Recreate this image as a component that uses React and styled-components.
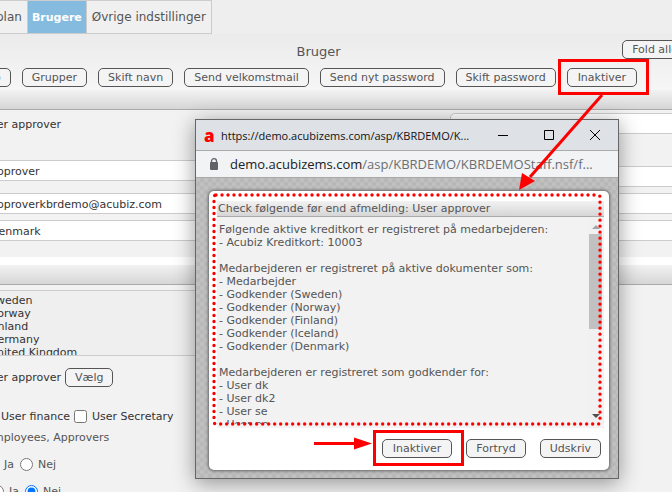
import React, { useState } from 'react'
import styled, { createGlobalStyle } from 'styled-components';

const GlobalStyle = createGlobalStyle`
    * { box-sizing: border-box; }

    body {
        margin: 0;
        background: #f2f2f2;
        font-family: Verdana, "DejaVu Sans", sans-serif;
        font-size: 11px;
        line-height: 13px;
        color: #555;
    }
`

const Page = styled.div`
    position: relative;
    height: 100vh;
    overflow: hidden;
`

/* the page is scrolled a little to the right, so it runs past both edges */
const Sheet = styled.div`
    margin: 0 -16px 0 -17px;
`

const Tabs = styled.nav`
    display: flex;
    height: 34px;
    background: #eee;
`

const Tab = styled.a`
    display: flex;
    align-items: center;
    padding: 0 ${props => props.$active ? '4px' : '5px'};
    border: 1px solid #ccc;
    border-left-width: ${props => props.$first ? '1px' : '0'};
    background: ${props => props.$active ? '#86bbe0' : '#f0f0f0'};
    color: ${props => props.$active ? '#fff' : '#555'};
    font-size: ${props => props.$active ? '11px' : '12px'};
    font-weight: ${props => props.$active ? 'bold' : 'normal'};
    text-decoration: none;
    white-space: nowrap;

    &:first-child { padding-left: 12px; }
`

const Header = styled.header`
    padding: 6px 0 3px;
    background: linear-gradient(#ebebeb, #f6f6f6);
`

const TitleRow = styled.div`
    display: flex;
    align-items: center;
`

const Title = styled.h1`
    flex: 1;
    margin: 0;
    padding: 4px 0 0 32px;
    font-size: 13px;
    line-height: 15px;
    font-weight: normal;
    text-align: center;
`

const Toolbar = styled.div`
    display: flex;
    gap: 11px;
    margin: 9px 0 0 -13px;
`

const Button = styled.button`
    flex: none;
    height: 19px;
    padding: 0 9px;
    border: 1px solid #555;
    border-radius: 5px;
    background: #f4f4f4;
    color: #555;
    font: inherit;
    line-height: 15px;
    white-space: nowrap;
`

const Highlight = styled.span`
    position: relative;
    display: flex;

    ${Button} { padding: 0 10px; }

    &::after {
        content: '';
        position: absolute;
        z-index: 1;
        inset: -9px -12px -8px -9px;
        border: 3px solid #f00;
        pointer-events: none;
    }
`

const SectionBar = styled.div`
    height: 20px;
    border-bottom: 1px solid #aaa;
    background: linear-gradient(#f2f2f2, #d6d6d6);
`

const Fields = styled.div`
    display: grid;
    grid-template-columns: 1fr 238px;
    padding: 3px 0 16px;
    border-bottom: 8px solid #fff;
`

const Column = styled.div`
    display: flex;
    flex-direction: column;
`

const Static = styled.div`
    color: #333;
    line-height: 23px;
`

const Input = styled.input`
    width: 100%;
    height: 21px;
    margin-top: ${props => props.$gap || 0}px;
    padding: 2px 6px 0;
    border: 1px solid #ccc;
    border-radius: 5px;
    background: #fff;
    color: #333;
    font: inherit;
`

const List = styled.select`
    display: block;
    width: 60%;
    height: 66px;
    margin-top: 5px;
    padding: 3px 5px 0;
    border: 1px solid #ccc;
    background: #efefef;
    color: #333;
    font: inherit;
    overflow: hidden;

    option {
        min-height: 13px;
        padding: 0;
    }
`

const Row = styled.div`
    display: flex;
    align-items: center;
    gap: ${props => props.$wide ? '6px' : '4px'};
    margin-top: ${props => props.$gap}px;
    padding-left: ${props => props.$indent || 0}px;
    color: ${props => props.$dark ? '#333' : '#555'};
`

const Choice = styled.label`
    display: flex;
    align-items: center;
    gap: 5px;

    input {
        width: 13px;
        height: 13px;
        margin: 0;
    }
`

const Window = styled.section`
    position: absolute;
    top: 119px;
    left: 195px;
    display: flex;
    flex-direction: column;
    width: 424px;
    height: 360px;
    border: 1px solid #666;
    box-shadow: 0 4px 20px rgba(0, 0, 0, .4);
    font-family: "Segoe UI", "Open Sans", sans-serif;
`

const TitleBar = styled.div`
    display: flex;
    align-items: center;
    height: 31px;
    padding: 0 16px 0 8px;
    border-bottom: 1px solid #aaa;
    background: #dee1e6;
    color: #111;
    font-size: 11px;
`

const Favicon = styled.span`
    flex: none;
    width: 17px;
    color: #f00;
    font-size: 17px;
    font-weight: 800;
`

const WindowTitle = styled.span`
    flex: 1;
    min-width: 0;
    white-space: nowrap;
`

const WindowButton = styled.button`
    flex: none;
    display: flex;
    width: 14px;
    margin-left: 32px;
    padding: 0;
    border: 0;
    background: none;
`

const AddressBar = styled.div`
    display: flex;
    align-items: center;
    gap: 11px;
    height: 27px;
    padding: 0 13px;
    border-bottom: 1px solid #aaa;
    background: #f1f3f4;
    color: #6b6f74;
    font-size: 13px;
    white-space: nowrap;

    svg { flex: none; }

    b {
        color: #202124;
        font-weight: normal;
    }
`

const Backdrop = styled.div`
    flex: 1;
    display: flex;
    min-height: 0;
    padding: 13px 9px 8px 13px;
    background: repeating-conic-gradient(#b8b8b8 0 25%, #c0c0c0 0 50%) 0 0 / 8px 8px;
`

const Card = styled.div`
    position: relative;
    flex: 1;
    display: flex;
    flex-direction: column;
    min-width: 0;
    padding: 10px 5px 12px 8px;
    border-radius: 5px;
    background: #fff;
    box-shadow: 0 0 3px 1px #666;
    font-family: Verdana, "DejaVu Sans", sans-serif;
`

const DottedFrame = styled.svg`
    position: absolute;
    top: 4px;
    left: 5px;
    width: calc(100% - 14px);
    height: calc(100% - 50px);
    overflow: visible;
    pointer-events: none;
`

const CardTitle = styled.h2`
    margin: 0;
    padding: 0 1px;
    border-bottom: 1px solid #aaa;
    background: linear-gradient(#f2f2f2, #d6d6d6);
    font-size: 11px;
    line-height: 15px;
    font-weight: normal;
`

const Report = styled.div`
    flex: 1;
    display: flex;
    min-height: 0;
    padding-bottom: 4px;
    background: #f2f2f2;
`

const ReportText = styled.div`
    flex: 1;
    padding: 6px 2px 0;
    overflow: hidden;

    p { margin: 0 0 13px; }
`

const ScrollTrack = styled.div`
    display: flex;
    flex-direction: column;
    align-items: center;
    width: 17px;
    padding: 8px 0 6px;
    background: #f1f1f1;

    svg { flex: none; }
`

const ScrollThumb = styled.div`
    width: 13px;
    height: 95px;
    margin: 5px 0 auto;
    background: #c1c1c1;
`

const Actions = styled.div`
    display: flex;
    justify-content: flex-end;
    gap: 14px;
    margin-top: 11px;
    padding-right: 3px;
`

const Arrows = styled.svg`
    position: absolute;
    top: 0;
    left: 0;
    pointer-events: none;
`

const countries = ['Sweden', 'Norway', 'Finland', 'Germany', 'United Kingdom'];

const report = [
    ['Følgende aktive kreditkort er registreret på medarbejderen:', '- Acubiz Kreditkort: 10003'],
    [
        'Medarbejderen er registreret på aktive dokumenter som:',
        '- Medarbejder',
        '- Godkender (Sweden)',
        '- Godkender (Norway)',
        '- Godkender (Finland)',
        '- Godkender (Iceland)',
        '- Godkender (Denmark)',
    ],
    ['Medarbejderen er registreret som godkender for:', '- User dk', '- User dk2', '- User se', '- User no'],
];

const YesNo = ({name, gap, indent, initial}) => {
    const [value, setValue] = useState(initial);

    return (
        <Row $gap={gap} $indent={indent} $wide>
            <Choice>
                <input type="radio" name={name} checked={value === 'ja'} onChange={() => setValue('ja')} />
                Ja
            </Choice>
            <Choice>
                <input type="radio" name={name} checked={value === 'nej'} onChange={() => setValue('nej')} />
                Nej
            </Choice>
        </Row>
    )
}

const UserForm = () => (
    <form onSubmit={(ev) => ev.preventDefault()}>
        <SectionBar />
        <Fields>
            <Column>
                <Static>User approver</Static>
                <Input aria-label="Kortnavn" $gap={24} defaultValue="approver" />
                <Input aria-label="E-mail" $gap={12} defaultValue="approverkbrdemo@acubiz.com" />
                <Input aria-label="Land" $gap={6} defaultValue="Denmark" />
            </Column>
            <Column>
                <Input aria-label="Felt 1" />
                <Input aria-label="Felt 2" $gap={32} />
                <Input aria-label="Felt 3" $gap={6} />
                <Input aria-label="Felt 4" $gap={6} />
            </Column>
        </Fields>
        <SectionBar />
        <List multiple size={5} aria-label="Lande">
            {countries.map(country => <option key={country}>{country}</option>)}
        </List>
        <Row $gap={12} $dark>
            User approver
            <Button type="button">Vælg</Button>
        </Row>
        <Row $gap={23} $dark>
            <Choice><input type="checkbox" />User finance</Choice>
            <Choice><input type="checkbox" />User Secretary</Choice>
        </Row>
        <Row $gap={8} $indent={3}>Employees, Approvers</Row>
        <YesNo name="first" gap={14} indent={3} />
        <YesNo name="second" gap={14} indent={8} initial="nej" />
    </form>
)

const Popup = () => (
    <Window role="dialog" aria-label="Inaktiver">
        <TitleBar>
            <Favicon>a</Favicon>
            <WindowTitle>https://demo.acubizems.com/asp/KBRDEMO/K...</WindowTitle>
            <WindowButton aria-label="Minimer">
                <svg width="14" height="14"><path d="M2 7.500h10" stroke="#000" /></svg>
            </WindowButton>
            <WindowButton aria-label="Maksimer">
                <svg width="14" height="14"><path d="M2.500 2.500h9v9h-9z" fill="none" stroke="#000" /></svg>
            </WindowButton>
            <WindowButton aria-label="Luk">
                <svg width="14" height="14"><path d="M2 2l10 10M12 2L2 12" stroke="#000" /></svg>
            </WindowButton>
        </TitleBar>
        <AddressBar>
            <svg width="10" height="12">
                <rect x="1" y="4" width="8" height="8" rx="1" fill="#5f6368" />
                <path d="M2.500 5V3a2.500 2.300 0 0 1 5 0v2" fill="none" stroke="#5f6368" strokeWidth="1.300" />
            </svg>
            <span><b>demo.acubizems.com</b>/asp/KBRDEMO/KBRDEMOStaff.nsf/f...</span>
        </AddressBar>
        <Backdrop>
            <Card>
                <CardTitle>Check følgende før end afmelding: User approver</CardTitle>
                <Report>
                    <ReportText>
                        {report.map(lines => (
                            <p key={lines[0]}>
                                {lines.map(line => <React.Fragment key={line}>{line}<br /></React.Fragment>)}
                            </p>
                        ))}
                    </ReportText>
                    <ScrollTrack>
                        <svg width="8" height="4"><path d="M0 4l4-4 4 4z" fill="#a3a3a3" /></svg>
                        <ScrollThumb />
                        <svg width="8" height="4"><path d="M0 0h8l-4 4z" fill="#505050" /></svg>
                    </ScrollTrack>
                </Report>
                <Actions>
                    <Highlight><Button>Inaktiver</Button></Highlight>
                    <Button>Fortryd</Button>
                    <Button>Udskriv</Button>
                </Actions>
                <DottedFrame>
                    <rect
                        width="100%"
                        height="100%"
                        rx="2"
                        fill="none"
                        stroke="#f00"
                        strokeWidth="3.400"
                        strokeLinecap="round"
                        strokeDasharray="0 6"
                    />
                </DottedFrame>
            </Card>
        </Backdrop>
    </Window>
)

const App = () => {
    return (
        <Page>
            <GlobalStyle />
            <Sheet>
                <Tabs>
                    <Tab href="#plan" $first>plan</Tab>
                    <Tab href="#brugere" $active>Brugere</Tab>
                    <Tab href="#indstillinger">Øvrige indstillinger</Tab>
                </Tabs>
                <Header>
                    <TitleRow>
                        <Title>Bruger</Title>
                        <Button>Fold alle</Button>
                    </TitleRow>
                    <Toolbar>
                        <Button>Info</Button>
                        <Button>Grupper</Button>
                        <Button>Skift navn</Button>
                        <Button>Send velkomstmail</Button>
                        <Button>Send nyt password</Button>
                        <Button>Skift password</Button>
                        <Highlight><Button>Inaktiver</Button></Highlight>
                    </Toolbar>
                </Header>
                <UserForm />
            </Sheet>
            <Popup />
            <Arrows width="672" height="492" fill="#f00" stroke="#f00">
                <path d="M602 95L530 177" strokeWidth="3" />
                <path d="M519 190l3-17 13 8z" stroke="none" />
                <path d="M314 443.500h42" strokeWidth="3" />
                <path d="M354 437.500l18 6-18 6z" stroke="none" />
            </Arrows>
        </Page>
    )
}

export default App
